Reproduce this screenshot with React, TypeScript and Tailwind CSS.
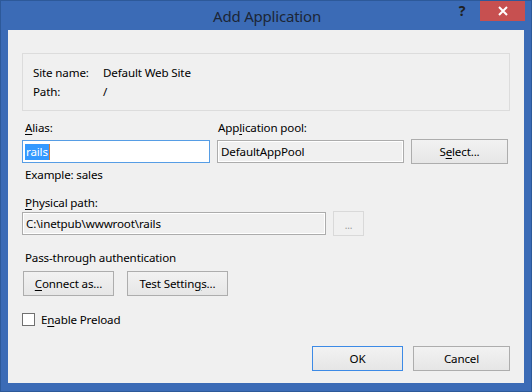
import React from "react";

const U = ({ children }: { children: React.ReactNode }) => (
  <span className="underline underline-offset-2 decoration-1">{children}</span>
);

const Btn = ({
  children,
  w,
  def,
  disabled,
}: {
  children: React.ReactNode;
  w: string;
  def?: boolean;
  disabled?: boolean;
}) => (
  <div
    className={
      "h-[25px] flex items-center justify-center border " +
      w +
      " " +
      (disabled
        ? "border-[#d9d9d9] bg-[#f0f0f0] text-[#9a9a9a]"
        : def
        ? "border-[#3c8ae6] bg-gradient-to-b from-[#f2f2f2] to-[#e6e6e6]"
        : "border-[#adadad] bg-gradient-to-b from-[#f2f2f2] to-[#e6e6e6]")
    }
  >
    {children}
  </div>
);

export default function App() {
  return (
    <div
      className="w-[532px] h-[392px] bg-[#3b6bb6] border border-[#2d5999] flex flex-col text-[11.6px] tracking-[-0.15px] text-black leading-[16px]"
      style={{ fontFamily: '"Noto Sans", "Open Sans", sans-serif' }}
    >
      {/* title bar */}
      <div className="h-[29px] grid grid-cols-[1fr_auto_1fr]">
        <div />
        <div className="text-[15px] leading-[20px] tracking-[-0.2px] text-[#1c2636] pt-[5px] pl-[2px]">Add Application</div>
        <div className="flex justify-end items-start">
          <div className="w-[14px] h-[20px] flex items-center justify-center mr-[11px] text-[14px] font-bold text-[#1f1f1f]">
            ?
          </div>
          <div className="w-[45px] h-[20px] bg-[#c75050] flex items-center justify-center mr-[6px]">
            <svg width="10" height="10" viewBox="0 0 10 10">
              <path d="M1 1 L9 9 M9 1 L1 9" stroke="white" strokeWidth="2" />
            </svg>
          </div>
        </div>
      </div>

      {/* client */}
      <div className="ml-[7px] mr-[7px] h-[353px] bg-[#f0f0f0] pl-[14px] flex flex-col">
        {/* group box */}
        <div className="mt-[23px] w-[488px] h-[58px] border border-[#dcdcdc] pl-[10px] pt-[11px]">
          <div className="flex h-[19px]">
            <span className="w-[70px]">Site name:</span>
            <span>Default Web Site</span>
          </div>
          <div className="flex h-[19px]">
            <span className="w-[70px]">Path:</span>
            <span>/</span>
          </div>
        </div>

        <div className="mt-[9px] flex h-[16px]">
          <div className="w-[195px] pl-[3px]">
            <U>A</U>lias:
          </div>
          <div className="pl-[1px]">
            App<U>l</U>ication pool:
          </div>
        </div>

        <div className="mt-[3px] flex items-center h-[25px]">
          <div className="w-[188px] h-[23px] border border-[#569de5] bg-white flex items-center pl-[2px]">
            <span className="bg-[#3399ff] text-white px-[1px] h-[16px]">rails</span>
            <span className="w-[1px] h-[16px] bg-[#cc7a3c]" />
          </div>
          <div className="ml-[7px] w-[187px] h-[23px] border border-[#acacac] bg-[#f0f0f0] flex items-center pl-[3px] shadow-[inset_0_0_0_1px_#ffffff]">
            DefaultAppPool
          </div>
          <div className="ml-[7px]">
            <Btn w="w-[97px]">
              S<U>e</U>lect...
            </Btn>
          </div>
        </div>

        <div className="mt-[3px] pl-[3px] h-[16px]">Example: sales</div>

        <div className="mt-[12px] pl-[3px] h-[16px]">
          <U>P</U>hysical path:
        </div>

        <div className="mt-[0px] flex items-center h-[25px]">
          <div className="w-[304px] h-[23px] border border-[#acacac] bg-[#f0f0f0] flex items-center pl-[3px] shadow-[inset_0_0_0_1px_#ffffff]">
            C:\inetpub\wwwroot\rails
          </div>
          <div className="ml-[7px]">
            <Btn w="w-[31px]" disabled>
              <span className="text-[10px] leading-[10px] pt-[2px]">...</span>
            </Btn>
          </div>
        </div>

        <div className="mt-[14px] pl-[3px] h-[16px]">Pass-through authentication</div>

        <div className="mt-[5px] flex h-[25px] pl-[1px]">
          <Btn w="w-[91px]">
            <U>C</U>onnect as...
          </Btn>
          <div className="ml-[13px]">
            <Btn w="w-[101px]">
              Test Settin<U>g</U>s...
            </Btn>
          </div>
        </div>

        <div className="mt-[17px] flex items-center h-[13px]">
          <div className="w-[13px] h-[13px] border border-[#707070] bg-white" />
          <span className="ml-[6px]">
            E<U>n</U>able Preload
          </span>
        </div>

        <div className="mt-[20px] flex justify-end h-[25px] pr-[14px]">
          <Btn w="w-[91px]" def>
            OK
          </Btn>
          <div className="ml-[10px]">
            <Btn w="w-[97px]">Cancel</Btn>
          </div>
        </div>
      </div>
    </div>
  );
}
